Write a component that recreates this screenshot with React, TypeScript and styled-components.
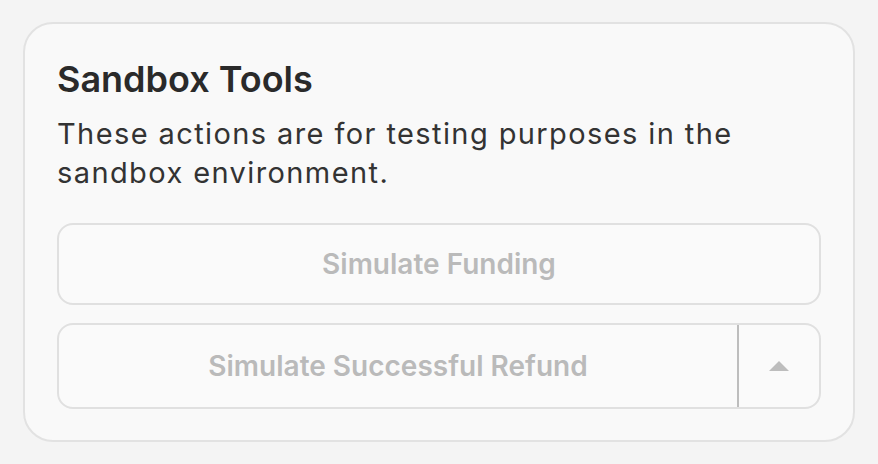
import React from 'react'
import styled, { createGlobalStyle } from 'styled-components'

const GlobalStyle = createGlobalStyle`
  * { box-sizing: border-box; }
  html, body {
    margin: 0;
    padding: 0;
    background: #f4f4f4;
    font-family: Inter, "Liberation Sans", sans-serif;
  }
`

const Page = styled.div`
  padding: 22px 23px;
  height: 464px;
`

const Card = styled.section`
  height: 420px;
  background: #f9f9f9;
  border: 2px solid #e2e2e2;
  border-radius: 30px;
  padding: 33px 32px 31px;
  display: flex;
  flex-direction: column;
`

const Title = styled.h2`
  margin: 0;
  font-size: 36px;
  line-height: 44px;
  font-weight: 600;
  color: #2a2a2a;
`

const Description = styled.p`
  margin: 13px 0 0;
  font-size: 29px;
  line-height: 39px;
  letter-spacing: 1.4px;
  color: #333;
`

const Actions = styled.div`
  margin-top: 31px;
  display: flex;
  flex-direction: column;
  gap: 18px;
`

const ActionButton = styled.button`
  height: 82px;
  width: 100%;
  background: #fafafa;
  border: 2px solid #e0e0e0;
  border-radius: 16px;
  font-family: inherit;
  font-size: 28px;
  font-weight: 600;
  color: #bababa;
  cursor: not-allowed;
`

const SplitButton = styled.div`
  height: 86px;
  display: flex;
  background: #fafafa;
  border: 2px solid #e0e0e0;
  border-radius: 16px;
  overflow: hidden;
`

const SplitMain = styled.button`
  flex: 1;
  background: transparent;
  border: none;
  border-right: 2px solid #bdbdbd;
  font-family: inherit;
  font-size: 28px;
  font-weight: 600;
  color: #bababa;
  cursor: not-allowed;
`

const SplitToggle = styled.button`
  width: 80px;
  background: transparent;
  border: none;
  display: flex;
  align-items: center;
  justify-content: center;
  cursor: not-allowed;
`

export default function App() {
  return (
    <>
      <GlobalStyle />
      <Page>
        <Card>
          <Title>Sandbox Tools</Title>
          <Description>
            These actions are for testing purposes in the sandbox environment.
          </Description>
          <Actions>
            <ActionButton disabled>Simulate Funding</ActionButton>
            <SplitButton>
              <SplitMain disabled>Simulate Successful Refund</SplitMain>
              <SplitToggle disabled>
                <svg width="20" height="10" viewBox="0 0 20 10">
                  <path d="M10 0 L20 10 L0 10 Z" fill="#bdbdbd" />
                </svg>
              </SplitToggle>
            </SplitButton>
          </Actions>
        </Card>
      </Page>
    </>
  )
}
